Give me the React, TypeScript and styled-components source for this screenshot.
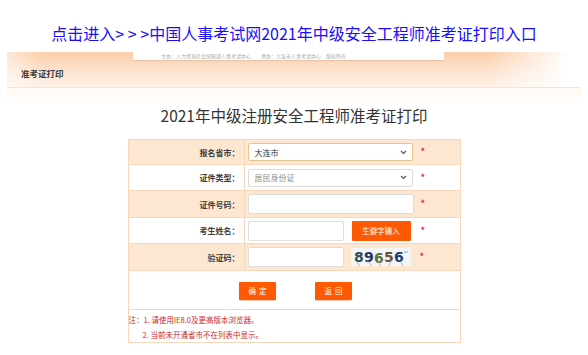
import React from 'react';
import styled, { createGlobalStyle } from 'styled-components';

const GlobalStyle = createGlobalStyle`
  body {
    margin: 0;
    background: #fff;
    font-family: "Noto Sans CJK SC", "Noto Sans", "Liberation Sans", sans-serif;
  }
`;

const Page = styled.div`
  width: 588px;
  height: 355px;
  overflow: hidden;
`;

const TopLink = styled.a`
  display: block;
  height: 52px;
  box-sizing: border-box;
  padding-top: 23px;
  text-align: center;
  font-size: 16px;
  line-height: 20px;
  color: #1a0dff;
  text-decoration: none;
`;

const Banner = styled.div`
  margin: 0 7px;
  height: 35px;
  border-bottom: 1px solid #f5e3d3;
  display: flex;
  flex-direction: column;
  background:
    linear-gradient(to right, rgba(255, 255, 255, 0.5) 0%, rgba(255, 255, 255, 0) 6%, rgba(255, 255, 255, 0) 84%, #fff 98%),
    linear-gradient(to bottom, #fbcfaa 0%, #fde3cf 55%, #fef2e8 100%);
`;

const SiteStrip = styled.div`
  margin-left: 126px;
  width: 311px;
  height: 8px;
  background: #fff;
  box-shadow: 0 1px 1px rgba(210, 160, 130, 0.35);
  box-sizing: border-box;
  padding-left: 28px;
  font-size: 5px;
  line-height: 7px;
  color: #aaa;
  white-space: nowrap;
`;

const Crumb = styled.div`
  padding: 7px 0 0 14px;
  font-size: 8.5px;
  line-height: 12px;
  font-weight: bold;
  color: #3a3a3a;
`;

const Glow = styled.div`
  margin: 0 7px;
  height: 17px;
  background: linear-gradient(to bottom, #fff8f2, #fff);
`;

const Title = styled.h1`
  margin: 0 0 14px;
  text-align: center;
  font-size: 15.5px;
  line-height: 20px;
  font-weight: normal;
  color: #333;
`;

const FormTable = styled.table`
  margin: 0 auto;
  width: 333px;
  border-collapse: collapse;
  border: 1px solid #f6d7bb;
`;

const Row = styled.tr<{ $shade?: boolean; $h: number }>`
  height: ${p => p.$h}px;
  background: ${p => (p.$shade ? '#fde7d0' : '#fff')};
`;

const LabelCell = styled.td`
  width: 111px;
  padding: 0 4px 0 0;
  border: 1px solid #f6d7bb;
  text-align: right;
  font-size: 8px;
  font-weight: bold;
  color: #3d3d3d;
  white-space: nowrap;
`;

const FieldCell = styled.td`
  padding: 0 0 0 3px;
  border: 1px solid #f6d7bb;
`;

const FieldLine = styled.div`
  display: flex;
  align-items: center;
`;

const Select = styled.div<{ $focus?: boolean; $muted?: boolean }>`
  width: 165px;
  height: 18px;
  box-sizing: border-box;
  border: 1px solid ${p => (p.$focus ? '#e9c48c' : '#dcdcdc')};
  border-radius: 2px;
  background: #fff;
  display: flex;
  align-items: center;
  justify-content: space-between;
  padding: 0 5px 0 6px;
  font-size: 8px;
  color: ${p => (p.$muted ? '#8a8a8a' : '#333')};
`;

const TextInput = styled.div<{ $w: number }>`
  width: ${p => p.$w}px;
  height: 20px;
  box-sizing: border-box;
  border: 1px solid #dedede;
  border-radius: 2px;
  background: #fff;
`;

const Star = styled.span<{ $gap: number }>`
  margin-left: ${p => p.$gap}px;
  color: #e8282e;
  font-size: 9px;
  font-weight: bold;
  line-height: 8px;
`;

const RareButton = styled.button`
  margin-left: 8px;
  width: 59px;
  height: 20px;
  border: 0;
  border-radius: 1px;
  background: #fe5a03;
  color: #fff;
  font-family: inherit;
  font-size: 7.5px;
  padding: 0;
`;

const Captcha = styled.svg`
  margin-left: 7px;
  display: block;
`;

const ActionCell = styled.td`
  border: 1px solid #f6d7bb;
  padding: 1px 0 0;
`;

const Actions = styled.div`
  display: flex;
  justify-content: center;
  gap: 39px;
  padding-left: 3px;
`;

const ActionButton = styled.button`
  width: 37px;
  height: 18px;
  border: 0;
  border-radius: 1px;
  background: #fe5a03;
  color: #fff;
  font-family: inherit;
  font-size: 7.5px;
  letter-spacing: 3px;
  padding: 0 0 0 3px;
  box-shadow: 0 1px 1px rgba(200, 80, 0, 0.3);
`;

const NoteCell = styled.td`
  border: 1px solid #f6d7bb;
  padding: 2px 0 0;
  vertical-align: top;
`;

const Note = styled.div<{ $indent?: boolean }>`
  padding-left: ${p => (p.$indent ? 14 : 0)}px;
  font-size: 7.5px;
  line-height: 15px;
  color: #cf1f2a;
  white-space: nowrap;
`;

const Chevron = () => (
  <svg width="7" height="5" viewBox="0 0 7 5">
    <path d="M1 1l2.5 2.5L6 1" fill="none" stroke="#555" strokeWidth="1.2" />
  </svg>
);

const CaptchaImage = () => (
  <Captcha width="60" height="18" viewBox="0 0 60 18">
    <rect width="60" height="18" fill="#f3f5f6" />
    <g fontFamily="'DejaVu Sans', sans-serif" fontWeight="bold" fontSize="14">
      <text x="3" y="14" fill="#2f4c58">8</text>
      <text x="13" y="14" fill="#1f3657">9</text>
      <text x="23" y="15" fill="#5b6e3c">6</text>
      <text x="33" y="14" fill="#6e4e3c">5</text>
      <text x="43" y="14" fill="#203c6e">6</text>
    </g>
    <path d="M5 13l4 5M16 12l5 6M27 13l3 5M40 12l-2 6M49 13l3 5" stroke="#9aa3a8" strokeWidth="0.7" fill="none" />
    <path d="M53 4h4" stroke="#8a9298" strokeWidth="0.8" />
  </Captcha>
);

export default function App() {
  return (
    <Page>
      <GlobalStyle />
      <TopLink href="#">点击进入&gt; &gt; &gt;中国人事考试网2021年中级安全工程师准考证打印入口</TopLink>
      <Banner>
        <SiteStrip>主办：人力资源社会保障部人事考试中心　　承办：大连市人事考试中心　版权所有</SiteStrip>
        <Crumb>准考证打印</Crumb>
      </Banner>
      <Glow />
      <Title>2021年中级注册安全工程师准考证打印</Title>
      <FormTable>
        <tbody>
          <Row $shade $h={25}>
            <LabelCell>报名省市：</LabelCell>
            <FieldCell>
              <FieldLine>
                <Select $focus>
                  <span>大连市</span>
                  <Chevron />
                </Select>
                <Star $gap={8}>*</Star>
              </FieldLine>
            </FieldCell>
          </Row>
          <Row $h={26}>
            <LabelCell>证件类型：</LabelCell>
            <FieldCell>
              <FieldLine>
                <Select $muted>
                  <span>居民身份证</span>
                  <Chevron />
                </Select>
                <Star $gap={8}>*</Star>
              </FieldLine>
            </FieldCell>
          </Row>
          <Row $shade $h={27}>
            <LabelCell>证件号码：</LabelCell>
            <FieldCell>
              <FieldLine>
                <TextInput $w={166} />
                <Star $gap={7}>*</Star>
              </FieldLine>
            </FieldCell>
          </Row>
          <Row $h={26}>
            <LabelCell>考生姓名：</LabelCell>
            <FieldCell>
              <FieldLine>
                <TextInput $w={96} />
                <RareButton>生僻字输入</RareButton>
                <Star $gap={10}>*</Star>
              </FieldLine>
            </FieldCell>
          </Row>
          <Row $shade $h={27}>
            <LabelCell>验证码：</LabelCell>
            <FieldCell>
              <FieldLine>
                <TextInput $w={96} />
                <CaptchaImage />
                <Star $gap={9}>*</Star>
              </FieldLine>
            </FieldCell>
          </Row>
          <Row $h={39}>
            <ActionCell colSpan={2}>
              <Actions>
                <ActionButton>确定</ActionButton>
                <ActionButton>返回</ActionButton>
              </Actions>
            </ActionCell>
          </Row>
          <Row $h={32}>
            <NoteCell colSpan={2}>
              <Note>注：1. 请使用IE8.0及更高版本浏览器。</Note>
              <Note $indent>2. 当前未开通省市不在列表中显示。</Note>
            </NoteCell>
          </Row>
        </tbody>
      </FormTable>
    </Page>
  );
}
